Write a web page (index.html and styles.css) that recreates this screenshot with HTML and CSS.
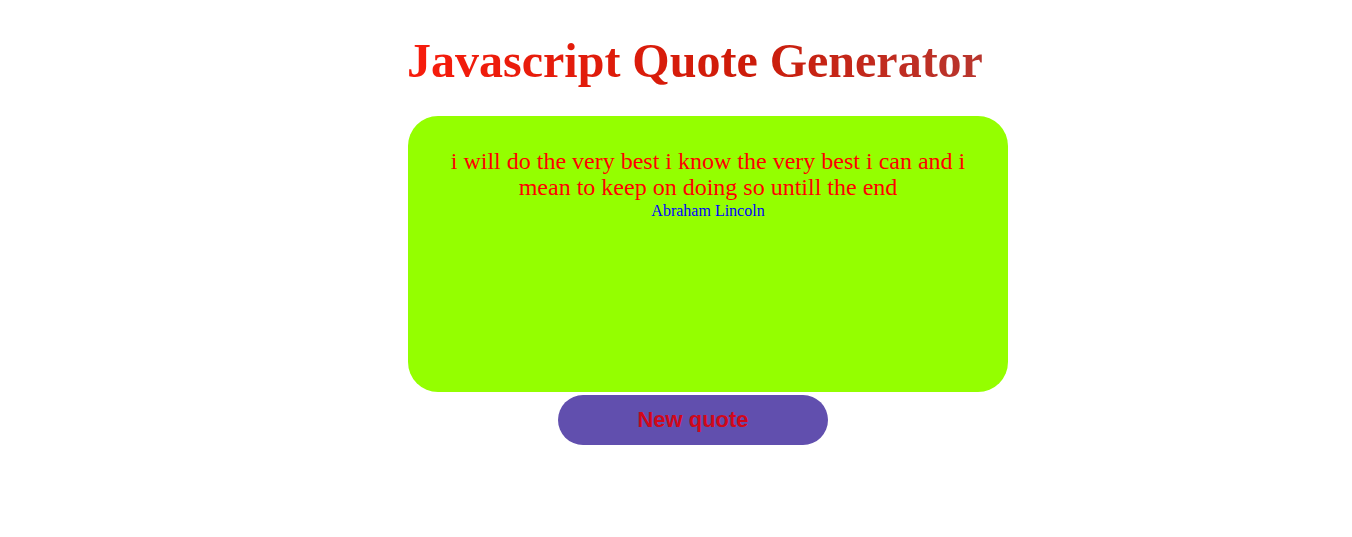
FILE: index.html
```html
<!DOCTYPE html>
<html lang="en">
<head>
  <meta charset="UTF-8">
  <meta name="viewport" content="width=device-width, initial-scale=1.0">
  <title>Javascript Quote Generator</title>
  <link rel="stylesheet" href="styles.css">
</head>
<body>
  <div class="wrap">
    <h1 class="title">Javascript Quote Generator</h1>

    <div class="card">
      <p id="quote" class="quote">i will do the very best i know the very best i can and i mean to keep on doing so untill the end</p>
      <p id="author" class="author">Abraham Lincoln</p>
    </div>

    <button class="btn" onclick="newQuote()">New quote</button>
  </div>

  <script>
    const quotes = [
      { text: "i will do the very best i know the very best i can and i mean to keep on doing so untill the end", author: "Abraham Lincoln" },
      { text: "the best way to predict the future is to create it", author: "Peter Drucker" },
      { text: "it always seems impossible until it is done", author: "Nelson Mandela" }
    ];
    let current = 0;

    function newQuote() {
      current = (current + 1) % quotes.length;
      document.getElementById("quote").innerText = quotes[current].text;
      document.getElementById("author").innerText = quotes[current].author;
    }
  </script>
</body>
</html>
```

FILE: styles.css
```css
body {
  margin: 0;
  background: #fff;
  font-family: "Liberation Serif", "Times New Roman", serif;
}
.wrap {
  display: flex;
  flex-direction: column;
  align-items: center;
  padding-left: 38px;
}
.title {
  font-size: 48px;
  font-weight: bold;
  margin: 33px 0 28px;
  background: linear-gradient(90deg, #f81c0c, #cc1c0a 60%, #b8362e);
  -webkit-background-clip: text;
  background-clip: text;
  color: transparent;
}
.card {
  width: 540px;
  height: 220px;
  padding: 32px 30px 24px;
  margin-left: 26px;
  background: #94ff00;
  border-radius: 30px;
  text-align: center;
}
.quote {
  margin: 0;
  font-size: 24px;
  line-height: 26px;
  color: #ff0000;
}
.author {
  margin: 2px 0 0;
  font-size: 16px;
  color: #0000ff;
}
.btn {
  margin-top: 3px;
  margin-left: -4px;
  width: 270px;
  height: 50px;
  border: none;
  border-radius: 25px;
  background: #614fae;
  color: #d0081a;
  font-family: "Liberation Sans", Arial, sans-serif;
  font-size: 22px;
  font-weight: bold;
  cursor: pointer;
}
```
